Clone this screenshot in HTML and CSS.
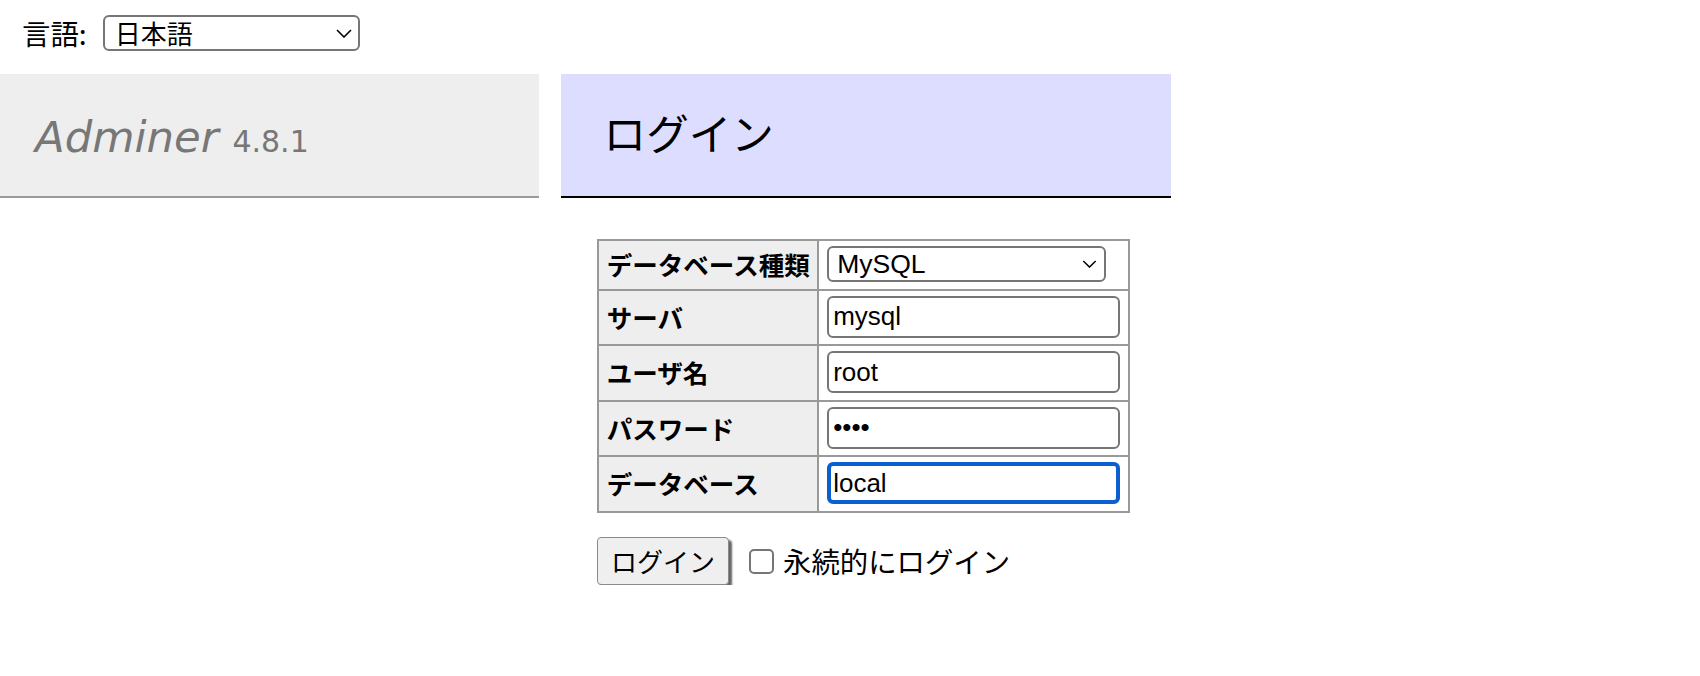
FILE: index.html
```html
<!DOCTYPE html>
<html lang="ja">
<head>
<meta charset="utf-8">
<title>ログイン - Adminer</title>
<link rel="stylesheet" href="styles.css">
</head>
<body>
<div class="lang">
  <label class="lang-label">言語:</label>
  <span class="select-wrap">
    <select class="lang-select"><option>日本語</option></select>
    <svg class="chev chev-lang" viewBox="0 0 16 9"><path d="M1 1 L8 8 L15 1"/></svg>
  </span>
</div>
<div class="layout">
  <div class="menu">
    <h1><span class="brand">Adminer</span> <span class="version">4.8.1</span></h1>
  </div>
  <div class="content">
    <h2>ログイン</h2>
    <form class="login-form">
      <table class="login">
        <tr><th>データベース種類</th><td><span class="select-wrap"><select class="driver"><option>MySQL</option></select><svg class="chev chev-driver" viewBox="0 0 16 9"><path d="M1 1 L8 8 L15 1"/></svg></span></td></tr>
        <tr><th>サーバ</th><td><input class="field" value="mysql"></td></tr>
        <tr><th>ユーザ名</th><td><input class="field" value="root"></td></tr>
        <tr><th>パスワード</th><td><input class="field" type="password" value="root"></td></tr>
        <tr><th>データベース</th><td><input class="field focused" value="local"></td></tr>
      </table>
      <p class="actions"><input type="submit" class="btn" value="ログイン"><label class="perm"><input type="checkbox" class="check">永続的にログイン</label></p>
    </form>
  </div>
</div>
</body>
</html>
```

FILE: styles.css
```css
* { box-sizing: border-box; }
body {
  margin: 0;
  font-family: "DejaVu Sans", "Noto Sans CJK JP", sans-serif;
  font-size: 28.4px;
  color: #000;
  background: #fff;
}
.lang {
  display: flex;
  align-items: center;
  height: 74px;
  padding: 0 0 8px 22px;
}
.lang-label {
  font-family: "Noto Sans CJK JP", sans-serif;
  font-size: 28.4px;
  line-height: 36px;
  margin-right: 16px;
}
.select-wrap {
  position: relative;
  display: inline-block;
}
.lang-select, .driver {
  appearance: none;
  -webkit-appearance: none;
  display: block;
  height: 36px;
  border: 2px solid #767676;
  border-radius: 6px;
  background: #fff;
  color: #000;
  margin: 0;
}
.lang-select {
  width: 257px;
  font-family: "Noto Sans CJK JP", sans-serif;
  font-size: 26px;
  line-height: 32px;
  padding: 0 0 0 10px;
}
.driver {
  width: 279px;
  font-family: "Liberation Sans", sans-serif;
  font-size: 26.5px;
  padding: 0 0 0 8px;
}
.chev {
  position: absolute;
  pointer-events: none;
  fill: none;
  stroke: #000;
  stroke-width: 1.6;
}
.chev-lang { right: 8px; top: 14px; width: 16px; height: 9px; }
.chev-driver { right: 9px; top: 14px; width: 15px; height: 8px; }

.layout {
  display: flex;
  align-items: flex-start;
}
.menu {
  width: 539px;
  flex: none;
}
h1 {
  margin: 0;
  height: 124px;
  padding: 36px 0 0 35px;
  background: #eee;
  border-bottom: 2px solid #999;
  font-weight: normal;
  font-size: 43.4px;
  line-height: 54px;
  color: #777;
  white-space: nowrap;
}
.brand { font-style: italic; }
.version { font-size: 30px; }
.content {
  margin-left: 22px;
  width: 610px;
  flex: none;
}
h2 {
  margin: 0;
  height: 124px;
  padding: 31px 42.6px 0;
  background: #ddf;
  border-bottom: 2px solid #000;
  font-weight: normal;
  font-family: "Noto Sans CJK JP", sans-serif;
  font-size: 42.6px;
  line-height: 54px;
}
.login-form { padding-left: 36px; }
.login {
  border-collapse: collapse;
  margin-top: 41px;
  font-size: 25.56px;
}
.login th, .login td {
  border: 2px solid #999;
  padding: 5px 7.7px 6.5px;
}
.login th {
  background: #eee;
  text-align: left;
  font-weight: bold;
  font-family: "Noto Sans CJK JP", sans-serif;
  line-height: 1.25;
  white-space: nowrap;
}
.field {
  display: block;
  width: 293px;
  height: 42px;
  margin: 0;
  border: 2px solid #767676;
  border-radius: 6px;
  padding: 0 4px;
  font-family: "Liberation Sans", sans-serif;
  font-size: 26px;
  color: #000;
  background: #fff;
}
.field.focused {
  border: 4px solid #0b5fce;
  padding: 0 2px;
  outline: none;
}
.actions {
  display: flex;
  align-items: center;
  margin: 24px 0 0;
}
.btn {
  width: 132px;
  height: 48px;
  margin: 0;
  padding: 0;
  font-family: "Noto Sans CJK JP", sans-serif;
  font-size: 26px;
  color: #000;
  background: #efefef;
  border: 1px solid #8a8a8a;
  border-radius: 4px;
  box-shadow: 3px 3px 2px rgba(0, 0, 0, 0.6);
}
.perm {
  display: flex;
  align-items: center;
  font-family: "Noto Sans CJK JP", sans-serif;
  font-size: 28.4px;
  line-height: 36px;
}
.check {
  appearance: none;
  -webkit-appearance: none;
  width: 25px;
  height: 25px;
  margin: 1px 9px 0 20px;
  border: 2px solid #767676;
  border-radius: 5px;
  background: #fff;
}
```
